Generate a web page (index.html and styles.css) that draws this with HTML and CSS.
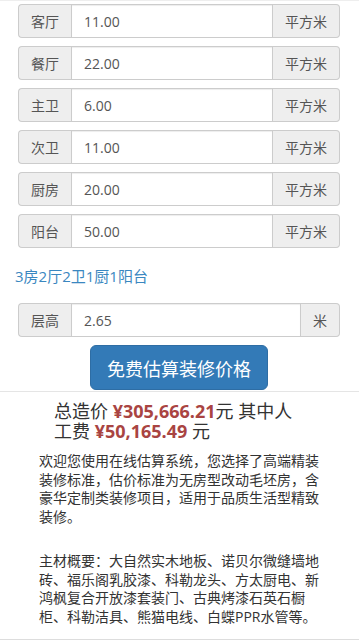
FILE: index.html
```html
<!DOCTYPE html>
<html lang="zh-CN">
<head>
<meta charset="utf-8">
<title>装修估价</title>
<link rel="stylesheet" href="styles.css">
</head>
<body>
<div class="topline"></div>
<div class="form">
  <div class="group"><span class="addon left">客厅</span><input class="field" value="11.00"><span class="addon right">平方米</span></div>
  <div class="group"><span class="addon left">餐厅</span><input class="field" value="22.00"><span class="addon right">平方米</span></div>
  <div class="group"><span class="addon left">主卫</span><input class="field" value="6.00"><span class="addon right">平方米</span></div>
  <div class="group"><span class="addon left">次卫</span><input class="field" value="11.00"><span class="addon right">平方米</span></div>
  <div class="group"><span class="addon left">厨房</span><input class="field" value="20.00"><span class="addon right">平方米</span></div>
  <div class="group"><span class="addon left">阳台</span><input class="field" value="50.00"><span class="addon right">平方米</span></div>
  <div class="summary">3房2厅2卫1厨1阳台</div>
  <div class="group last"><span class="addon left">层高</span><input class="field" value="2.65"><span class="addon right">米</span></div>
  <button class="btn">免费估算装修价格</button>
</div>
<div class="result">
  <div class="price">总造价 <b>¥305,666.21</b>元 其中人工费 <b>¥50,165.49</b> 元</div>
  <p class="desc">欢迎您使用在线估算系统，您选择了高端精装装修标准，估价标准为无房型改动毛坯房，含豪华定制类装修项目，适用于品质生活型精致装修。</p>
  <p class="desc second">主材概要：大自然实木地板、诺贝尔微缝墙地砖、福乐阁乳胶漆、科勒龙头、方太厨电、新鸿枫复合开放漆套装门、古典烤漆石英石橱柜、科勒洁具、熊猫电线、白蝶PPR水管等。</p>
</div>
</body>
</html>
```

FILE: styles.css
```css
html, body {
  margin: 0;
  padding: 0;
  background: #fff;
}
body {
  font-family: "Open Sans", "Noto Sans CJK SC", sans-serif;
  color: #333;
  width: 359px;
  height: 641px;
  overflow: hidden;
}
.topline {
  border-top: 1px solid #eee;
}
.form {
  padding: 3px 19px 0 18px;
}
.group {
  display: flex;
  height: 34px;
  margin-bottom: 8px;
}
.group.last {
  margin-bottom: 0;
}
.addon {
  display: flex;
  align-items: center;
  padding: 0 12px;
  background: #eee;
  border: 1px solid #ccc;
  color: #555;
  font-size: 14px;
  box-sizing: border-box;
}
.addon.left {
  border-radius: 4px 0 0 4px;
  border-right: 0;
}
.addon.right {
  border-radius: 0 4px 4px 0;
  border-left: 0;
}
.field {
  flex: 1;
  min-width: 0;
  height: 34px;
  box-sizing: border-box;
  margin: 0;
  padding: 0 12px;
  border: 1px solid #ccc;
  box-shadow: inset 0 1px 1px rgba(0,0,0,.075);
  font-family: "Open Sans", "Noto Sans CJK SC", sans-serif;
  font-size: 14px;
  color: #555;
  background: #fff;
  outline: none;
}
.summary {
  margin: 18px 0 17px -3px;
  font-size: 15px;
  line-height: 20px;
  color: #3a87c0;
}
.btn {
  display: block;
  margin: 8px auto 0;
  width: 178px;
  height: 45px;
  padding: 0;
  background: #337ab7;
  border: 1px solid #2e6da4;
  border-radius: 6px;
  color: #fff;
  font-family: "Open Sans", "Noto Sans CJK SC", sans-serif;
  font-size: 18px;
}
.result {
  margin-top: 1px;
  border-top: 1px solid #e5e5e5;
  border-bottom: 1px solid #ddd;
  height: 249px;
  box-sizing: border-box;
}
.price {
  width: 255px;
  padding: 9px 0 0 54px;
  font-size: 18px;
  line-height: 20px;
  color: #333;
}
.price b {
  color: #a94442;
  font-weight: 700;
}
.desc {
  margin: 11px 39px 0 39px;
  font-size: 14px;
  line-height: 18.5px;
  color: #333;
}
.desc.second {
  margin-top: 26px;
}
```
